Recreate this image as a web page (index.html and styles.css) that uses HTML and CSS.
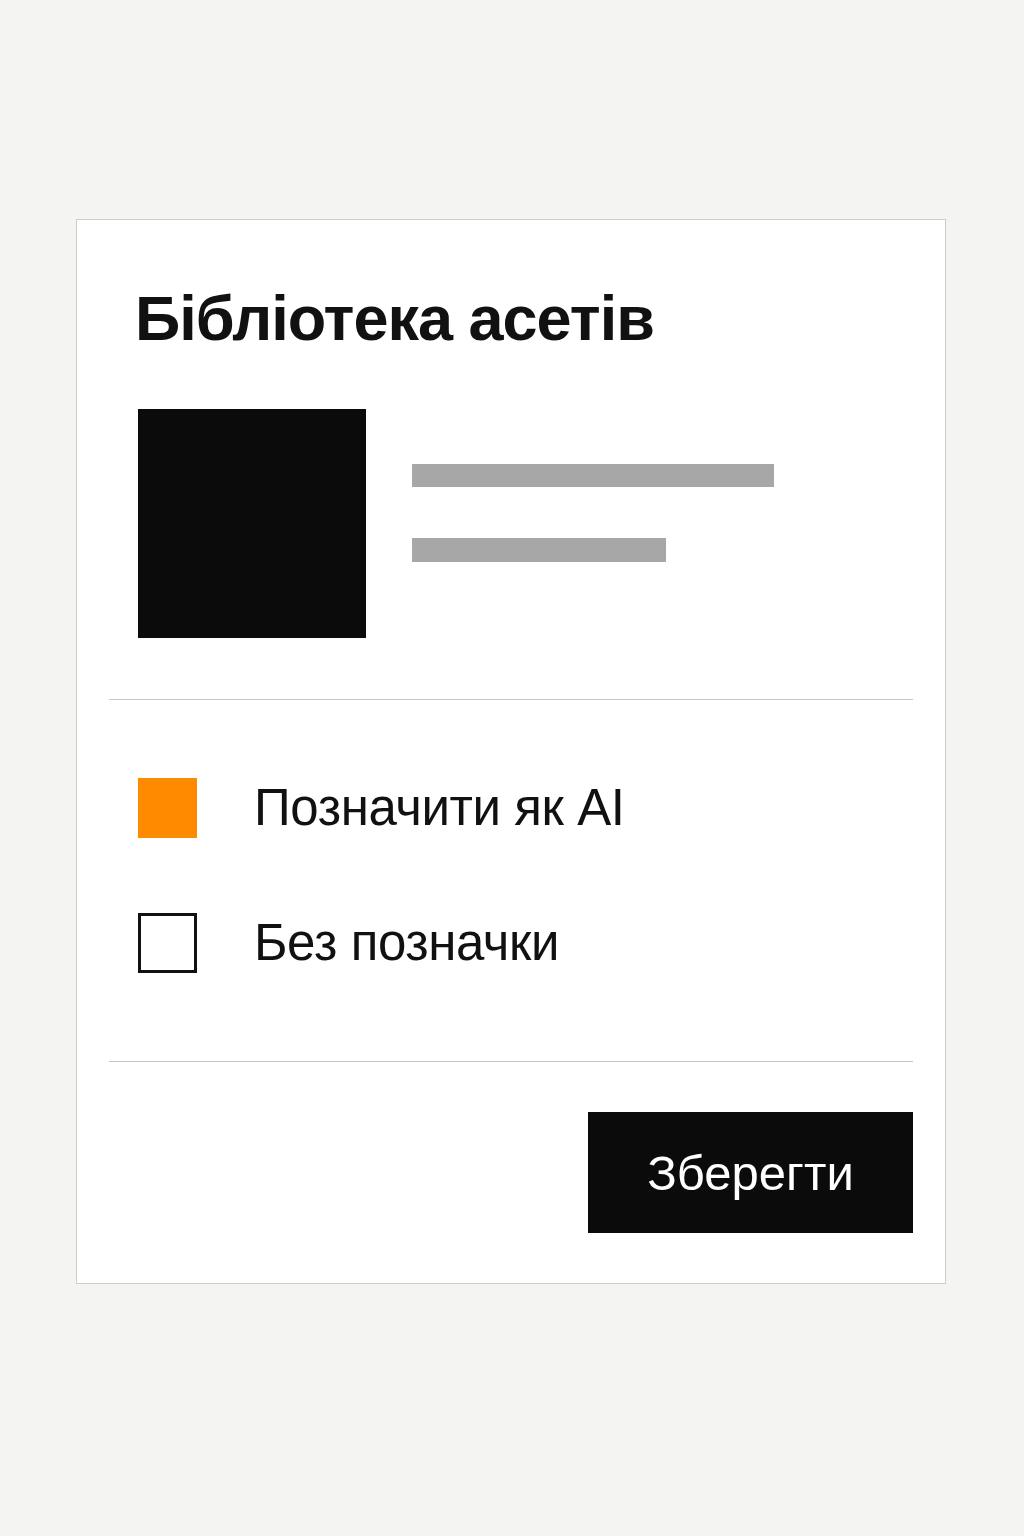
FILE: index.html
```html
<!DOCTYPE html>
<html lang="uk">
<head>
<meta charset="utf-8">
<title>Бібліотека асетів</title>
<link rel="stylesheet" href="styles.css">
</head>
<body>
<div class="page">
  <section class="card">
    <header class="header">
      <h1 class="title">Бібліотека асетів</h1>
    </header>
    <div class="media">
      <div class="thumb"></div>
      <div class="lines">
        <div class="bar bar-long"></div>
        <div class="bar bar-short"></div>
      </div>
    </div>
    <div class="divider divider-top"></div>
    <div class="options">
      <label class="option">
        <span class="box box-checked"></span>
        <span class="option-text">Позначити як AI</span>
      </label>
      <label class="option">
        <span class="box"></span>
        <span class="option-text">Без позначки</span>
      </label>
    </div>
    <div class="divider divider-bottom"></div>
    <footer class="footer">
      <button class="save" type="button">Зберегти</button>
    </footer>
  </section>
</div>
</body>
</html>
```
FILE: styles.css
```css
html, body {
  margin: 0;
  padding: 0;
  background: #f4f4f2;
  font-family: "Liberation Sans", Arial, sans-serif;
  color: #111;
}

.page {
  padding: 219px 0 0 76px;
}

.card {
  width: 870px;
  box-sizing: border-box;
  background: #ffffff;
  border: 1px solid #cdcdcd;
  padding: 0 32px 50px;
}

.header {
  padding: 60px 29px 0;
}

.title {
  margin: 0 0 0 -3px;
  font-size: 63px;
  line-height: 77px;
  font-weight: 700;
  color: #111;
  letter-spacing: -1px;
}

.media {
  display: flex;
  align-items: flex-start;
  gap: 46px;
  margin-top: 52px;
  padding: 0 29px;
}

.thumb {
  width: 228px;
  height: 229px;
  background: #0b0b0b;
}

.lines {
  display: flex;
  flex-direction: column;
  padding-top: 55px;
}

.bar {
  background: #a7a7a7;
}

.bar-long {
  width: 362px;
  height: 23px;
}

.bar-short {
  width: 254px;
  height: 24px;
  margin-top: 51px;
}

.divider {
  height: 1px;
  background: #c6c6c6;
}

.divider-top {
  margin-top: 61px;
}

.options {
  display: flex;
  flex-direction: column;
  gap: 75px;
  padding: 78px 29px 88px;
}

.option {
  display: flex;
  align-items: center;
  gap: 57px;
  height: 60px;
}

.box {
  flex: none;
  width: 59px;
  height: 60px;
  box-sizing: border-box;
  border: 3px solid #111;
  background: #fff;
}

.box-checked {
  border: none;
  background: #ff8a00;
}

.option-text {
  font-size: 51px;
  line-height: 60px;
  color: #111;
  letter-spacing: -0.4px;
}

.footer {
  display: flex;
  justify-content: flex-end;
  padding-top: 50px;
}

.save {
  width: 325px;
  height: 121px;
  border: none;
  background: #0b0b0b;
  color: #fff;
  font-family: "Liberation Sans", Arial, sans-serif;
  font-size: 49px;
  padding: 0;
}
```
